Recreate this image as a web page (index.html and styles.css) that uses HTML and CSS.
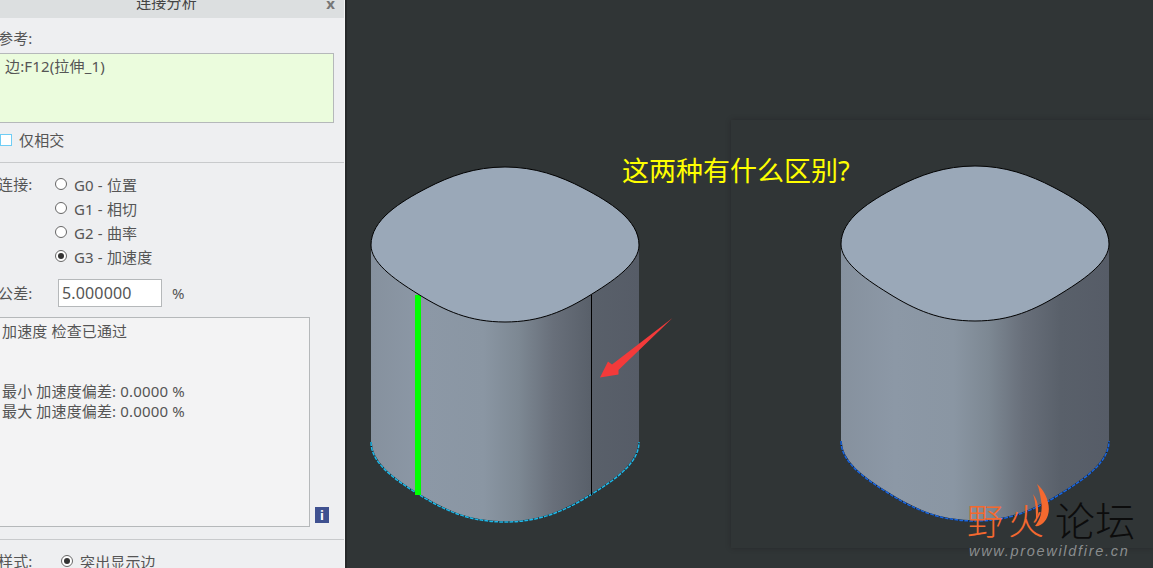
FILE: index.html
```html
<html>

<head>
	<title>连接分析</title>
	<link rel="stylesheet" href="styles.css">
</head>

<body>
	<div class="panel">
		<div class="titlebar">
			<span class="title">连接分析</span>
			<span class="close">x</span>
		</div>
		<div class="section refs">
			<div class="label">参考:</div>
			<div class="refbox">边:F12(拉伸_1)</div>
			<div class="check"><span class="checkbox"></span>仅相交</div>
		</div>
		<div class="section conn">
			<div class="conn-grid">
				<div class="label">连接:</div>
				<div class="radios">
					<div class="radio"><span class="dot"></span>G0 - 位置</div>
					<div class="radio"><span class="dot"></span>G1 - 相切</div>
					<div class="radio"><span class="dot"></span>G2 - 曲率</div>
					<div class="radio"><span class="dot on"></span>G3 - 加速度</div>
				</div>
			</div>
			<div class="tol">
				<div class="label">公差:</div>
				<div class="tol-input">5.000000</div>
				<div class="unit">%</div>
			</div>
			<div class="result-row">
				<div class="result">
					<div>加速度 检查已通过</div>
					<div class="blank"></div>
					<div class="blank"></div>
					<div>最小 加速度偏差: 0.0000 %</div>
					<div>最大 加速度偏差: 0.0000 %</div>
				</div>
				<div class="info">i</div>
			</div>
		</div>
		<div class="style-row">
			<div class="label">样式:</div>
			<div class="radio"><span class="dot on"></span>突出显示边</div>
		</div>
	</div>

	<div class="canvas">
		<div class="window"></div>
		<svg class="shapes" width="806" height="568" viewBox="347 0 806 568">
			<defs>
				<linearGradient id="side" gradientUnits="userSpaceOnUse" x1="371" x2="639" y1="0" y2="0">
					<stop offset="0" stop-color="#86919e" />
					<stop offset="0.2" stop-color="#8c98a6" />
					<stop offset="0.42" stop-color="#8a96a3" />
					<stop offset="0.55" stop-color="#7d8893" />
					<stop offset="0.68" stop-color="#686f7a" />
					<stop offset="0.82" stop-color="#59606a" />
					<stop offset="1" stop-color="#565c67" />
				</linearGradient>
				<path id="body" d="M371 245V442C371 462 392 478 418 494C445 511 470 522 505 522C540 522 565 511 592 494C618 478 639 462 639 442V245Z" />
				<path id="lid" d="M505 167C475 167 450 176 427 188C400 202 371 220 371 245C371 262 392 278 418 294C445 311 470 322 505 322C540 322 565 311 592 294C618 278 639 262 639 245C639 220 610 202 583 188C560 176 535 167 505 167Z" />
				<path id="rim" d="M371 442C371 462 392 478 418 494C445 511 470 522 505 522C540 522 565 511 592 494C618 478 639 462 639 442" />
			</defs>

			<use href="#body" fill="url(#side)" />
			<use href="#rim" class="rim-dark" />
			<use href="#rim" class="rim-cyan" />
			<rect x="415" y="295" width="6" height="200" fill="#00ff00" />
			<line x1="591.5" y1="295" x2="591.5" y2="495" stroke="#000" stroke-width="1" />
			<use href="#lid" class="lid" />

			<g transform="translate(470 -1)">
				<use href="#body" fill="url(#side)" />
				<use href="#rim" class="rim-dark" />
				<use href="#rim" class="rim-blue" />
				<use href="#lid" class="lid" />
			</g>

			<polygon points="600,377.5 608,361.5 612,364.5 672.5,318 618.5,370 618.5,374.5" fill="#f33a3a" />

			<text class="question" x="622" y="181">这两种有什么区别?</text>

			<path d="M1037 484C1046 492 1051 505 1048 515C1046 522 1040 527 1035 526C1040 520 1043 512 1041 500C1040 494 1039 488 1037 484Z" fill="#f4692f" />
			<path d="M1033 494C1038 500 1040 510 1036 522C1036 512 1036 502 1033 494Z" fill="#f4692f" />
			<text class="logo-a" x="967" y="535">野火</text>
			<text class="logo-b" x="1055" y="536">论坛</text>
			<text class="logo-url" x="969" y="556">www.proewildfire.cn</text>
		</svg>
	</div>
</body>

</html>
```

FILE: styles.css
```css
html, body {
	margin: 0;
	height: 100%;
	overflow: hidden;
}

body {
	display: flex;
	width: 1153px;
	height: 568px;
	font-family: 'Noto Sans', 'Noto Sans CJK SC', sans-serif;
	font-size: 15px;
	letter-spacing: 0.15px;
	color: #555;
	background: #303536;
}

.panel {
	width: 344px;
	height: 568px;
	flex: none;
	overflow: hidden;
	background: #eeeff1;
	border-right: 1px solid #f4f5f6;
	box-shadow: 2px 0 0 #26292a;
}

.titlebar {
	height: 18px;
	display: flex;
	justify-content: center;
	position: relative;
	padding-right: 11px;
	background: #dcdfe0;
	overflow: hidden;
}

.title {
	line-height: 14px;
	margin-top: -5px;
	color: #444;
}

.close {
	position: absolute;
	right: 9px;
	top: -7px;
	font-weight: bold;
	color: #777;
}

.section {
	border-bottom: 1px solid #c8cacc;
}

.label {
	margin-left: -2px;
	line-height: 20px;
}

.refs {
	height: 134px;
	padding-top: 10px;
}

.refbox {
	margin: 5px 10px 0 -2px;
	height: 68px;
	padding-left: 6px;
	line-height: 24px;
	background: #ebfcdd;
	border: 1px solid #b5b8ba;
}

.check {
	display: flex;
	align-items: center;
	margin-top: 7px;
	line-height: 20px;
}

.checkbox {
	width: 10px;
	height: 10px;
	margin: 0 7px 0 0;
	background: #fff;
	border: 1px solid #6fcdf5;
}

.conn {
	height: 365px;
	padding-top: 11px;
}

.conn-grid {
	display: flex;
}

.conn-grid .label {
	width: 57px;
}

.radios {
	display: flex;
	flex-direction: column;
	gap: 4px;
}

.radio {
	display: flex;
	align-items: center;
	height: 20px;
}

.dot {
	width: 10px;
	height: 10px;
	margin-right: 7px;
	background: #fff;
	border: 1px solid #666;
	border-radius: 50%;
	position: relative;
}

.dot.on::after {
	content: '';
	position: absolute;
	left: 2px;
	top: 2px;
	width: 6px;
	height: 6px;
	background: #333;
	border-radius: 50%;
}

.tol {
	display: flex;
	align-items: center;
	margin-top: 13px;
}

.tol .label {
	width: 60px;
}

.tol-input {
	width: 99px;
	height: 26px;
	padding-left: 3px;
	font-size: 16px;
	line-height: 26px;
	background: #fff;
	border: 1px solid #b5b8ba;
}

.unit {
	margin-left: 10px;
}

.result-row {
	display: flex;
	align-items: flex-end;
	margin-top: 10px;
}

.result {
	margin-left: -2px;
	padding-left: 3px;
	padding-top: 3px;
	width: 307px;
	height: 205px;
	line-height: 20px;
	background: #f3f3f4;
	border: 1px solid #b5b8ba;
}

.blank {
	height: 20px;
}

.info {
	width: 14px;
	height: 16px;
	margin: 0 0 4px 5px;
	background: #3f5190;
	color: #fff;
	font-weight: bold;
	font-size: 13px;
	line-height: 16px;
	text-align: center;
}

.style-row {
	display: flex;
	padding-top: 11px;
}

.style-row .label {
	width: 63px;
}

.canvas {
	flex: 1;
	position: relative;
	margin-left: 2px;
}

.window {
	position: absolute;
	left: 384px;
	top: 120px;
	right: 0;
	height: 428px;
	background: #303536;
	box-shadow: 0 0 4px #27292a;
}

.shapes {
	position: absolute;
	left: 0;
	top: 0;
}

.lid {
	fill: #9aa8b8;
	stroke: #000;
	stroke-width: 1;
}

.rim-dark {
	fill: none;
	stroke: #1a2024;
	stroke-width: 1.5;
}

.rim-cyan {
	fill: none;
	stroke: #1fb8e8;
	stroke-width: 1.5;
	stroke-dasharray: 4 1;
}

.rim-blue {
	fill: none;
	stroke: #1a66e0;
	stroke-width: 1.5;
	stroke-dasharray: 4 1;
}

.question {
	fill: #ffff00;
	font-size: 27px;
	letter-spacing: 0;
}

.logo-a {
	fill: #f4692f;
	font-size: 36px;
	font-weight: 300;
	letter-spacing: 5px;
}

.logo-b {
	fill: #0c0c0c;
	font-size: 40px;
	font-weight: 300;
}

.logo-url {
	fill: #8a8d8e;
	font-family: 'Liberation Sans', sans-serif;
	font-style: italic;
	font-size: 14.5px;
	letter-spacing: 1.7px;
}
```
